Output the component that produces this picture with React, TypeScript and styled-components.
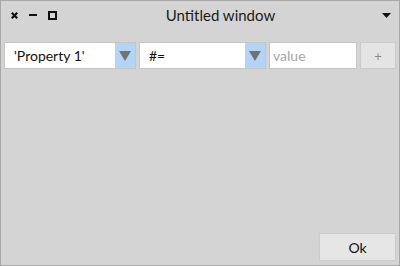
import React from "react";
import styled, { createGlobalStyle } from "styled-components";

const Global = createGlobalStyle`
  html, body { margin: 0; padding: 0; background: #d4d4d4; }
  body { font-family: Lato, "Noto Sans", sans-serif; }
  * { box-sizing: border-box; }
`;

const Window = styled.div`
  width: 400px;
  height: 266px;
  background: #d4d4d4;
  border: 1px solid #a8a8a8;
  display: flex;
  flex-direction: column;
`;

const TitleBar = styled.div`
  height: 28px;
  display: flex;
  align-items: center;
  padding: 0 8px 0 10px;
`;

const Controls = styled.div`
  display: flex;
  align-items: center;
  gap: 11px;
`;

const Title = styled.div`
  flex: 1;
  text-align: center;
  font-size: 15px;
  color: #1a1a1a;
  padding-left: 2px;
  padding-bottom: 1px;
`;

const Body = styled.div`
  flex: 1;
  display: flex;
  flex-direction: column;
  padding: 13px 3px 4px 3px;
`;

const Row = styled.div`
  display: flex;
  gap: 3px;
  height: 27px;
`;

const Combo = styled.div<{ $w: number }>`
  width: ${(p) => p.$w}px;
  display: flex;
  border: 1px solid #c4c4c4;
  background: #c4c4c4;
`;

const ComboText = styled.div`
  flex: 1;
  background: #fff;
  font-size: 14px;
  color: #111;
  display: flex;
  align-items: center;
  padding-left: 9px;
`;

const ArrowBtn = styled.div`
  width: 20px;
  background: #b2d4f6;
  display: flex;
  align-items: center;
  justify-content: center;
`;

const ValueField = styled.div`
  width: 88px;
  border: 1px solid #c4c4c4;
  background: #fff;
  font-size: 14px;
  color: #a6a6a6;
  display: flex;
  align-items: center;
  padding-left: 3px;
`;

const PlusBtn = styled.div`
  width: 36px;
  border: 1px solid #cacaca;
  background: #e4e4e4;
  color: #8a8a8a;
  font-size: 13px;
  display: flex;
  align-items: center;
  justify-content: center;
`;

const Spacer = styled.div`
  flex: 1;
`;

const Footer = styled.div`
  display: flex;
  justify-content: flex-end;
`;

const OkBtn = styled.div`
  width: 77px;
  height: 28px;
  border: 1px solid #cacaca;
  background: #e6e6e6;
  color: #111;
  font-size: 14px;
  display: flex;
  align-items: center;
  justify-content: center;
`;

const Arrow = () => (
  <svg width="12" height="10" viewBox="0 0 12 10">
    <polygon points="0,0 12,0 6,10" fill="#727272" />
  </svg>
);

export default function App() {
  return (
    <>
      <Global />
      <Window>
        <TitleBar>
          <Controls>
            <svg width="7" height="7" viewBox="0 0 7 7">
              <path d="M0.8 0.8 L6.2 6.2 M6.2 0.8 L0.8 6.2" stroke="#111" strokeWidth="2.2" />
            </svg>
            <svg width="8" height="8" viewBox="0 0 8 8">
              <rect x="0" y="3" width="8" height="2" fill="#111" />
            </svg>
            <svg width="9" height="9" viewBox="0 0 9 9">
              <rect x="1" y="1" width="7" height="7" fill="none" stroke="#111" strokeWidth="2" />
            </svg>
          </Controls>
          <Title>Untitled window</Title>
          <svg width="9" height="5" viewBox="0 0 9 5">
            <polygon points="0,0 9,0 4.5,5" fill="#111" />
          </svg>
        </TitleBar>
        <Body>
          <Row>
            <Combo $w={132}>
              <ComboText>'Property 1'</ComboText>
              <ArrowBtn><Arrow /></ArrowBtn>
            </Combo>
            <Combo $w={127}>
              <ComboText>#=</ComboText>
              <ArrowBtn><Arrow /></ArrowBtn>
            </Combo>
            <ValueField>value</ValueField>
            <PlusBtn>+</PlusBtn>
          </Row>
          <Spacer />
          <Footer>
            <OkBtn>Ok</OkBtn>
          </Footer>
        </Body>
      </Window>
    </>
  );
}
